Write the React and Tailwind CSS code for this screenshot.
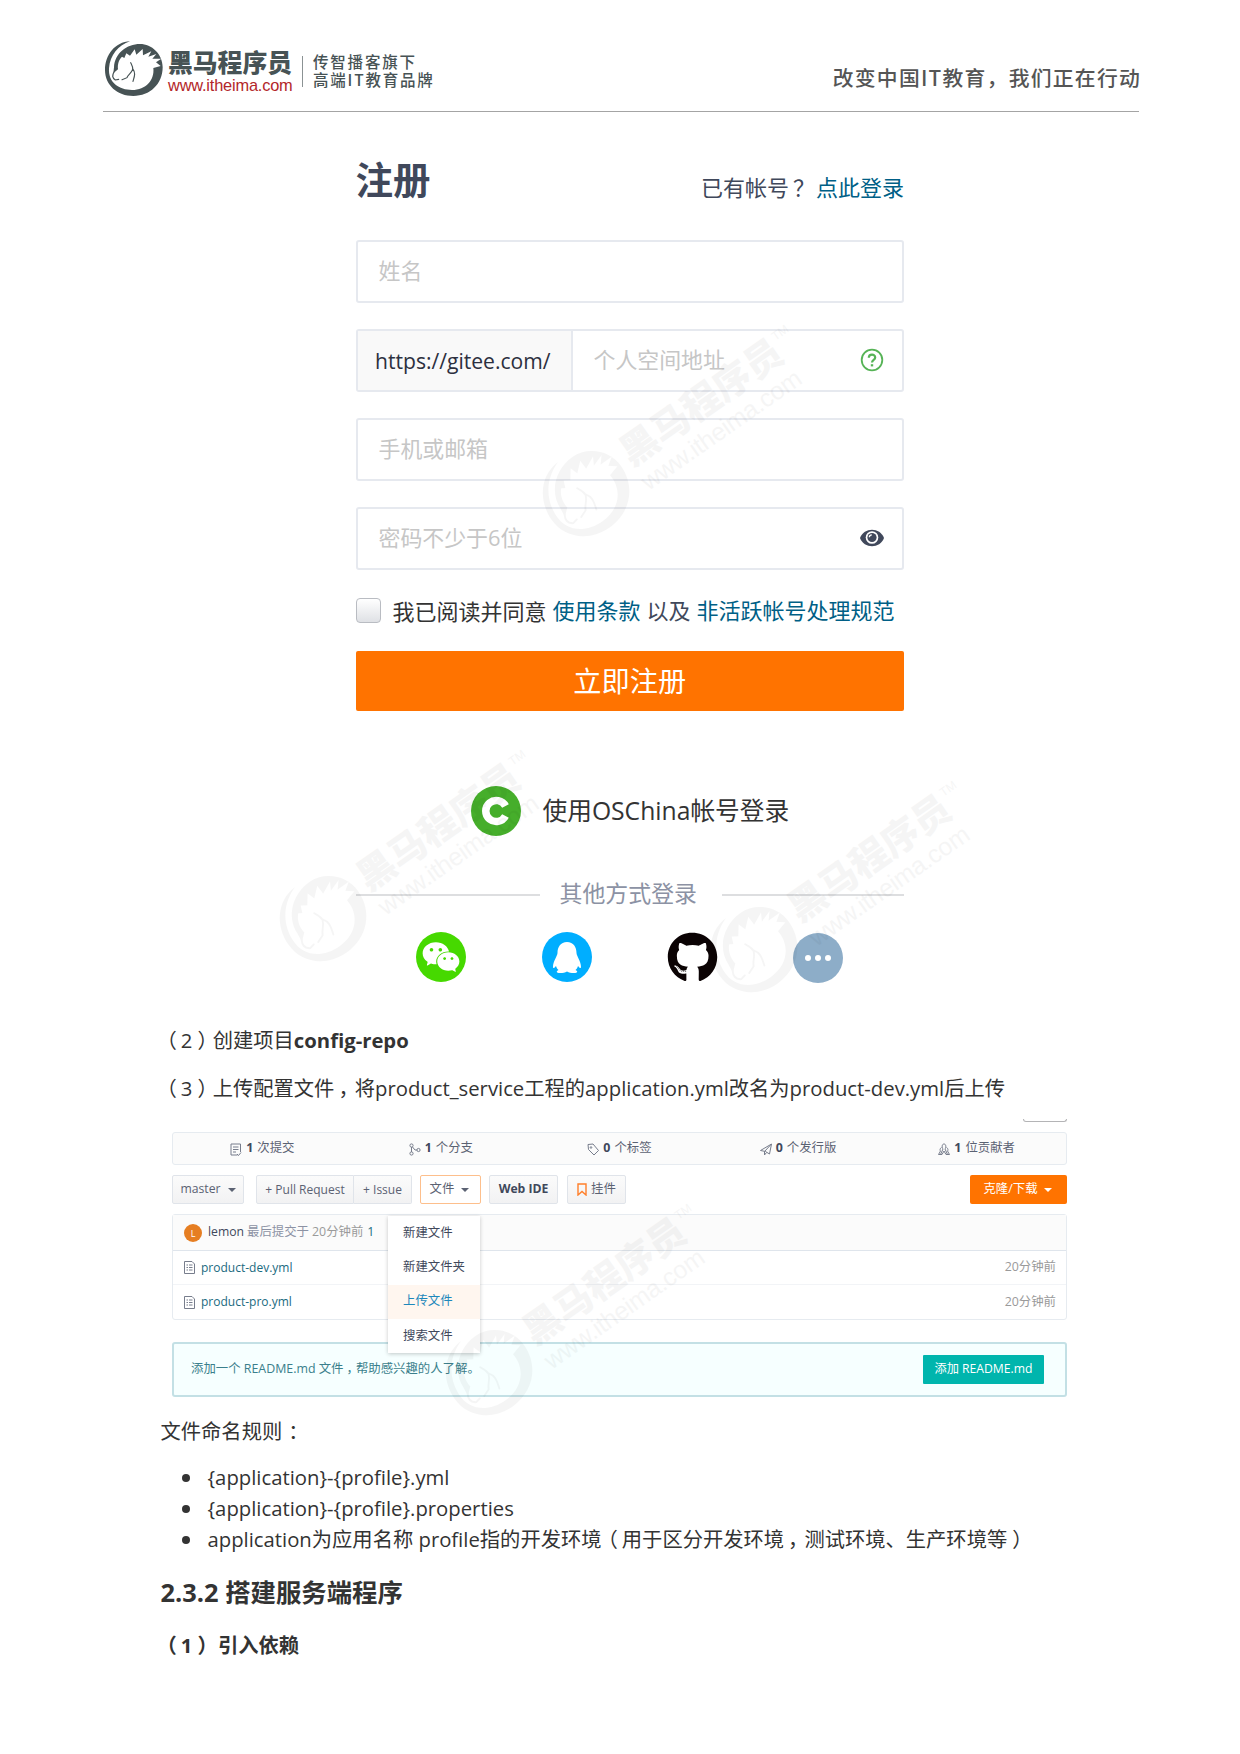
import React from "react";
import { AiFillWechat } from "react-icons/ai";
import { FaGithub } from "react-icons/fa";

function HorseMark({ className }) {
  return (
    <svg viewBox="42 30 180 171" className={className} fill="currentColor" stroke="none">
      <path d="M120 34C75 36 45 75 45 120C45 165 82 198 130 198C180 198 218 162 218 112C218 72 185 42 150 42C110 42 74 70 72 112L70 130L84 118C82 100 88 88 96 80L103 84L109 70L120 77L134 58L139 74L158 57L159 76L184 64L175 80L199 72L187 86L214 86L198 97L212 108L190 114C194 150 168 180 126 180C88 180 54 158 57 115C60 75 85 46 120 34Z" />
      <path
        d="M72 126C66 136 66 144 76 150L86 148M122 98C125 104 129 110 128 118C124 130 114 134 111 143L96 149M128 116C138 130 133 140 129 154"
        fill="none"
        stroke="currentColor"
        strokeWidth="3.5"
        strokeLinecap="round"
      />
    </svg>
  );
}

function Brand({ urlClass, tm }) {
  return (
    <div className="flex items-start">
      <HorseMark className="h-[57px] w-[60px] shrink-0" />
      <div className="ml-[4px] mt-[9px] whitespace-nowrap">
        <div className="h-[27px] text-[24.8px] leading-[27px] font-black">黑马程序员</div>
        <div className={`h-[18px] w-[123px] font-['Liberation_Sans'] text-[16.4px] leading-[18px] tracking-[-0.2px] ${urlClass}`}>
          www.itheima.com
        </div>
      </div>
      {tm && <span className="mt-[10px] ml-[1px] font-['Liberation_Sans'] text-[8px]">TM</span>}
    </div>
  );
}

function Watermark({ place }) {
  return (
    <div
      className={`pointer-events-none absolute z-20 origin-[30px_28px] rotate-[-35deg] scale-[1.52] text-black opacity-[0.035] ${place}`}
    >
      <Brand urlClass="" tm />
    </div>
  );
}

function Field({ children, className = "" }) {
  return (
    <div className={`flex h-[63px] items-center rounded-[3px] border-[2px] border-[#e6e9ef] bg-white text-[21.9px] text-[#c6c6c6] ${className}`}>
      {children}
    </div>
  );
}

function HelpIcon() {
  return (
    <svg viewBox="0 0 24 24" className="mr-[18px] mb-[2px] ml-auto h-[24px] w-[24px]" fill="none" stroke="#56b356" strokeWidth="1.8">
      <circle cx="12" cy="12" r="10.3" />
      <path d="M8.8 9.8C8.8 5.6 15.2 5.8 15.2 9.4C15.2 11.8 12 11.8 12 14.4" strokeWidth="2.2" />
      <path d="M12 16.2V18.4" strokeWidth="2.4" />
    </svg>
  );
}

function EyeIcon() {
  return (
    <svg viewBox="0 0 26 20" className="mr-[17px] mb-[1px] ml-auto h-[20px] w-[26px]">
      <path d="M1 10C5 -1 21 -1 25 10C21 21 5 21 1 10Z" fill="#40485b" />
      <circle cx="13" cy="9.5" r="6.3" fill="#fff" />
      <circle cx="13" cy="9.5" r="4.6" fill="#40485b" />
      <path d="M10.3 9.2C10.4 7.6 11.4 6.9 12.8 6.8" stroke="#fff" strokeWidth="1.3" fill="none" />
    </svg>
  );
}

function QQIcon() {
  return (
    <svg viewBox="0 0 50 50" className="h-[50px] w-[50px]">
      <circle cx="25" cy="25" r="25" fill="#00aeff" />
      <path
        d="M25 10C18.500 10 15.500 15 15.500 21C15.500 24 11 29 11 35C11 37 12.500 36 14 34C14.500 36 15.500 37 16.500 38C14 39 14 41 18 41C21 41 23 40.500 25 39.500C27 40.500 29 41 32 41C36 41 36 39 33.500 38C34.500 37 35.500 36 36 34C37.500 36 39 37 39 35C39 29 34.500 24 34.500 21C34.500 15 31.500 10 25 10Z"
        fill="#fff"
      />
    </svg>
  );
}

function OscIcon() {
  return (
    <svg viewBox="0 0 50 50" className="h-[50px] w-[50px]">
      <circle cx="25" cy="25" r="25" fill="#46ae2b" />
      <path d="M34.500 20A10.500 10.500 0 1 0 34.500 30" fill="none" stroke="#fff" strokeWidth="7.500" />
      <circle cx="25" cy="25" r="5" fill="#46ae2b" />
    </svg>
  );
}

function Signup() {
  return (
    <section className="ml-[355.5px] w-[548.5px] text-[#40485b]">
      <div className="flex h-[44px] items-center justify-between">
        <h1 className="text-[37.5px] leading-none font-bold">注册</h1>
        <p className="mt-[14px] text-[22px] leading-none">
          已有帐号<span className="relative left-[4px]">？</span>
          <span className="ml-[5px] text-[#005f86]">点此登录</span>
        </p>
      </div>
      <div className="mt-[38px] flex flex-col gap-[26px]">
        <Field className="pl-[21px]">姓名</Field>
        <Field>
          <div className="flex h-full w-[215px] shrink-0 items-center border-r-[2px] border-[#e6e9ef] bg-[#f9f9f9] pl-[17.5px] text-[21.1px] whitespace-nowrap text-[#2c3040]">
            https://gitee.com/
          </div>
          <span className="ml-[21px]">个人空间地址</span>
          <HelpIcon />
        </Field>
        <Field className="pl-[21px]">手机或邮箱</Field>
        <Field className="pl-[21px]">
          密码不少于6位
          <EyeIcon />
        </Field>
      </div>
      <div className="mt-[27px] flex h-[26px] items-center text-[22px] leading-none whitespace-nowrap">
        <span className="h-[25px] w-[25px] rounded-[4px] border-[1.5px] border-[#b9bcc2] bg-gradient-to-b from-white to-[#dfe1e5]" />
        <span className="mt-[2px] ml-[12px] text-[#333]">我已阅读并同意</span>
        <span className="ml-[6px] text-[#005f86]">使用条款</span>
        <span className="ml-[6px]">以及</span>
        <span className="ml-[6px] text-[#005f86]">非活跃帐号处理规范</span>
      </div>
      <div className="mt-[28px] flex h-[60px] items-center justify-center rounded-[2px] bg-[#ff7300] text-[28.200px] text-white">
        立即注册
      </div>
      <div className="mt-[75px] flex h-[50px] items-center pl-[115px]">
        <OscIcon />
        <span className="ml-[22px] text-[24.700px] whitespace-nowrap text-[#333]">使用OSChina帐号登录</span>
      </div>
      <div className="mt-[46px] flex h-[26px] items-center text-[22.900px] leading-none text-[#8c92a4]">
        <span className="h-[2px] w-[184px] bg-[#dddee0]" />
        <span className="flex-1 pr-[5px] pb-[2px] text-center">其他方式登录</span>
        <span className="h-[2px] w-[182px] bg-[#dddee0]" />
      </div>
      <div className="mt-[24px] flex pl-[60.500px]">
        <span className="flex h-[50px] w-[50px] items-center justify-center rounded-full bg-[#46d900]">
          <AiFillWechat className="h-[42px] w-[42px] text-white" />
        </span>
        <span className="ml-[75.500px]">
          <QQIcon />
        </span>
        <FaGithub className="ml-[75px] h-[51px] w-[51px] text-[#0b0304]" />
        <span className="mt-[1px] ml-[75.500px] flex h-[50px] w-[50px] items-center justify-center gap-[4px] rounded-full bg-[#8dadc8]">
          <i className="h-[6px] w-[6px] rounded-full bg-white" />
          <i className="h-[6px] w-[6px] rounded-full bg-white" />
          <i className="h-[6px] w-[6px] rounded-full bg-white" />
        </span>
      </div>
    </section>
  );
}

const line = { fill: "none", stroke: "#777d8c", strokeWidth: 1 };

const statIcons = {
  commit: (
    <g {...line}>
      <path d="M1 1H10.500V9M1 1V12H7.500M3 4H8.500M3 6.500H8.500M3 9H6M7 11L8.500 12.500L11 9.500" />
    </g>
  ),
  branch: (
    <g {...line}>
      <circle cx="2.500" cy="2.500" r="1.600" />
      <circle cx="2.500" cy="10.500" r="1.600" />
      <circle cx="9.500" cy="7" r="1.600" />
      <path d="M2.500 4V9M3.500 4L6 7H8" />
    </g>
  ),
  tag: (
    <g {...line}>
      <path d="M1 1.500L6 1L11.500 7.500L7 12L1.500 6.500Z" />
      <circle cx="4" cy="4.500" r=".8" />
    </g>
  ),
  release: (
    <g {...line}>
      <path d="M.5 7.500L11.500 1L9.500 11L5.500 8.500ZM11.500 1L4.500 8.500V12L6.500 9.500" />
    </g>
  ),
  people: (
    <g {...line}>
      <path d="M6 1C3.500 1 4 5 5 6L2.500 11.500M6 1C8.500 1 8 5 7 6L9.500 11.500M3.500 4.500C1.500 5.500 2 7.500 2.500 8L.5 11.500H4L6 8L8 11.500H11.500L9.500 8C10 7.500 10.500 5.500 8.500 4.500" />
    </g>
  ),
};

const stats = [
  ["commit", "1", "次提交"],
  ["branch", "1", "个分支"],
  ["tag", "0", "个标签"],
  ["release", "0", "个发行版"],
  ["people", "1", "位贡献者"],
];

function Caret({ className }) {
  return <i className={`h-0 w-0 border-x-[4px] border-t-[4.5px] border-x-transparent ${className}`} />;
}

function Btn({ children, className }) {
  return (
    <span
      className={`flex h-[29px] items-center justify-center border border-[#e0e4ea] bg-gradient-to-b from-[#fbfbfb] to-[#f2f2f3] whitespace-nowrap ${className}`}
    >
      {children}
    </span>
  );
}

function FileRow({ name, className }) {
  return (
    <div className={`flex h-[34px] items-center pr-[10px] pl-[11px] ${className}`}>
      <svg viewBox="0 0 11 13" className="h-[13px] w-[11px]" fill="none" stroke="#777d8c">
        <path d="M.5.5H8L10.500 3V12.500H.5ZM2.500 4H4M5 4H8.500M2.500 6.500H4M5 6.500H8.500M2.500 9H4M5 9H8.500" />
      </svg>
      <span className="ml-[6px] text-[12px] text-[#1a6a80]">{name}</span>
      <span className="ml-auto text-[#9a9a9a]">20分钟前</span>
    </div>
  );
}

function Repo() {
  return (
    <section className="ml-[172px] w-[895px] text-[12.400px] leading-none text-[#5b6273]">
      <div className="ml-auto h-[3px] w-[44px] rounded-b-[3px] border border-t-0 border-[#b4b4b6]" />
      <div className="mt-[10px] flex h-[33px] rounded-[3px] border border-[#e6ebf0] bg-[#fbfbfb]">
        {stats.map(([icon, n, label]) => (
          <div key={label} className="flex flex-1 items-center justify-center">
            <svg viewBox="0 0 12 13" className="mt-[2px] h-[13px] w-[12px]">
              {statIcons[icon]}
            </svg>
            <b className="ml-[4px] text-[#40485b]">{n}</b>
            <span className="ml-[4px]">{label}</span>
          </div>
        ))}
      </div>
      <div className="mt-[10px] flex">
        <Btn className="w-[72px] gap-[7px] rounded-[2px] text-[12.200px]">
          master <Caret className="border-t-[#5b6273]" />
        </Btn>
        <Btn className="ml-[12px] w-[98px] rounded-l-[2px] text-[12px]">+ Pull Request</Btn>
        <Btn className="w-[58px] rounded-r-[2px] border-l-0 text-[12px]">+ Issue</Btn>
        <span className="ml-[8px] flex h-[29px] w-[61px] items-center justify-center gap-[7px] rounded-[2px] border border-[#fdbf8c] bg-white pr-[2px]">
          文件 <Caret className="border-t-[#5b6273]" />
        </span>
        <Btn className="ml-[8px] w-[69px] rounded-[2px] text-[12.200px] font-bold text-[#40485b]">Web IDE</Btn>
        <Btn className="ml-[9px] w-[59px] gap-[4px] rounded-[2px]">
          <svg viewBox="0 0 10 13" className="h-[13px] w-[10px]" fill="none" stroke="#ff7f2a" strokeWidth="1.400">
            <path d="M1 1H9V12L5 8.500L1 12Z" />
          </svg>
          挂件
        </Btn>
        <span className="ml-auto flex h-[29px] w-[97px] items-center justify-center gap-[6px] rounded-[2px] bg-[#ff7300] pr-[2px] text-white">
          克隆/下载 <Caret className="border-t-white" />
        </span>
      </div>
      <div className="relative mt-[10px] rounded-[3px] border border-[#e6ebf0]">
        <div className="flex h-[36px] items-center border-b border-[#dfe5ec] bg-[#fbfbfb] pl-[11px]">
          <span className="flex h-[18px] w-[18px] items-center justify-center rounded-full bg-[#e67e22] pt-[2px] text-[9px] text-white">L</span>
          <span className="ml-[6px] text-[12.200px] text-[#40485b]">lemon</span>
          <span className="ml-[3px] text-[#8c92a4]">最后提交于</span>
          <span className="ml-[3px] text-[#9a9a9a]">20分钟前</span>
          <span className="ml-[4px] text-[#1a6a80]">1</span>
        </div>
        <FileRow name="product-dev.yml" className="border-b border-[#f2f4f7]" />
        <FileRow name="product-pro.yml" />
        <div className="absolute top-[1px] left-[215px] z-10 w-[92px] bg-white text-[#40485b] shadow-[0_1px_4px_rgba(0,0,0,0.22)]">
          {["新建文件", "新建文件夹", "上传文件", "搜索文件"].map((t) => (
            <div
              key={t}
              className={`flex h-[34.250px] items-center pl-[15px] ${t === "上传文件" ? "bg-[#fff6ef] text-[#1e88bb]" : ""}`}
            >
              {t}
            </div>
          ))}
        </div>
      </div>
      <div className="mt-[22px] flex h-[55px] items-center rounded-[3px] border-[2px] border-[#c3e0e5] bg-[#f6ffff] pr-[21px] pl-[17px]">
        <span className="text-[#3b7f8c]">
          添加一个 README.md 文件<span className="relative left-[3px]">，</span>帮助感兴趣的人了解。
        </span>
        <span className="ml-auto flex h-[29px] w-[121px] items-center justify-center rounded-[1px] bg-[#00b5ad] text-[12.200px] text-white">
          添加 README.md
        </span>
      </div>
    </section>
  );
}

const Open = () => <span className="relative left-[-4px]">（</span>;
const Close = () => <span className="relative left-[5px]">）</span>;
const Comma = () => <span className="relative left-[4px]">，</span>;

export default function App() {
  return (
    <main className="relative h-[1754px] w-[1240px] overflow-hidden bg-white font-['Open_Sans','Noto_Sans_CJK_SC',sans-serif] text-[20.3px] text-[#333]">
      <header className="mx-[103px] flex h-[112px] w-[1036px] items-start border-b border-[#a4a4a4] pt-[40px] text-[#475355]">
        <div className="ml-[1px]">
          <Brand urlClass="text-[#b3262a]" />
        </div>
        <span className="mt-[16px] ml-[10px] h-[31px] w-px bg-[#8b9294]" />
        <div className="mt-[12px] ml-[10px] font-['Noto_Sans_CJK_SC'] text-[15.500px] leading-[18px] font-medium tracking-[1.800px] whitespace-nowrap">
          <div>传智播客旗下</div>
          <div>高端IT教育品牌</div>
        </div>
        <div className="mt-[22px] mr-[-2px] ml-auto font-['Noto_Sans_CJK_SC'] text-[20.800px] leading-[30px] font-medium tracking-[1.250px] whitespace-nowrap text-[#555]">
          改变中国IT教育，我们正在行动
        </div>
      </header>
      <div className="h-[46px]" />
      <Signup />
      <div className="mt-[41px] ml-[160.500px] leading-[32px] whitespace-nowrap">
        <p>
          <Open />2<Close />创建项目<b>config-repo</b>
        </p>
        <p className="mt-[16px]">
          <Open />3<Close />上传配置文件<Comma />将product_service工程的application.yml改名为product-dev.yml后上传
        </p>
      </div>
      <div className="h-[15px]" />
      <Repo />
      <div className="mt-[18px] ml-[160.500px] whitespace-nowrap">
        <p className="leading-[32px]">
          文件命名规则<span className="relative left-[6px]">：</span>
        </p>
        <ul className="mt-[15px] leading-[31.200px]">
          {["{application}-{profile}.yml", "{application}-{profile}.properties"].map((t) => (
            <li key={t} className="flex items-center">
              <i className="mr-[17.500px] ml-[21.500px] h-[8px] w-[8px] rounded-full bg-[#333]" />
              {t}
            </li>
          ))}
          <li className="flex items-center">
            <i className="mr-[17.500px] ml-[21.500px] h-[8px] w-[8px] rounded-full bg-[#333]" />
            <span>
              application为应用名称 profile指的开发环境<Open />用于区分开发环境<Comma />测试环境、生产环境等<Close />
            </span>
          </li>
        </ul>
        <h2 className="mt-[18px] text-[25.400px] leading-[36px] font-bold">2.3.2 搭建服务端程序</h2>
        <h3 className="mt-[19px] leading-[32px] font-bold">
          <Open />1<Close /> 引入依赖
        </h3>
      </div>
      <Watermark place="top-[464px] left-[556px]" />
      <Watermark place="top-[889px] left-[293px]" />
      <Watermark place="top-[920px] left-[724px]" />
      <Watermark place="top-[1343px] left-[459px]" />
    </main>
  );
}
